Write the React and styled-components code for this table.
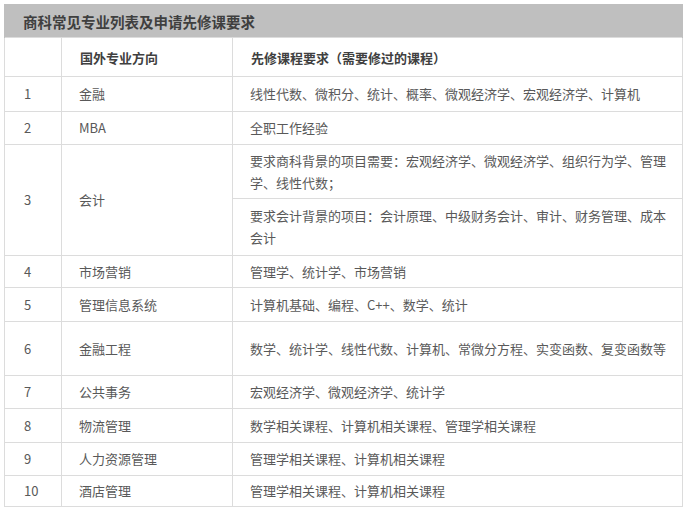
import React from "react";
import styled, { createGlobalStyle } from "styled-components";

const GlobalStyle = createGlobalStyle`
  html, body {
    margin: 0;
    padding: 0;
    background: #fff;
  }
  body {
    font-family: "Noto Sans CJK SC", "Liberation Sans", sans-serif;
  }
`;

const Wrap = styled.div`
  padding: 4px 5px 0 4px;
`;

const Table = styled.table`
  width: 678px;
  border-collapse: collapse;
  table-layout: fixed;
  font-size: 13px;
  color: #595959;
`;

const Caption = styled.th`
  height: 32px;
  padding: 0 0 0 18px;
  background: #bfbfbf;
  color: #3f3f3f;
  font-size: 14.5px;
  font-weight: 700;
  text-align: left;
  border: 1px solid #bfbfbf;
  border-bottom: none;
`;

const HeadCell = styled.th`
  height: 38px;
  padding: 0 10px 0 18px;
  border: 1px solid #dcdcdc;
  text-align: left;
  font-weight: 700;
  color: #404040;
  font-size: 13px;
`;

const Cell = styled.td`
  height: ${(p) => p.$h || 32}px;
  padding: 0 10px 0 ${(p) => (p.$first ? 19 : 17)}px;
  border: 1px solid #dcdcdc;
  line-height: 22px;
  vertical-align: middle;
  box-sizing: border-box;
`;

const rows = [
  { n: "1", major: "金融", req: "线性代数、微积分、统计、概率、微观经济学、宏观经济学、计算机", h: 35 },
  { n: "2", major: "MBA", req: "全职工作经验", h: 33 },
  {
    n: "3",
    major: "会计",
    sub: [
      { req: "要求商科背景的项目需要：宏观经济学、微观经济学、组织行为学、管理学、线性代数；", h: 54 },
      { req: "要求会计背景的项目：会计原理、中级财务会计、审计、财务管理、成本会计", h: 57 },
    ],
  },
  { n: "4", major: "市场营销", req: "管理学、统计学、市场营销", h: 32 },
  { n: "5", major: "管理信息系统", req: "计算机基础、编程、C++、数学、统计", h: 34 },
  { n: "6", major: "金融工程", req: "数学、统计学、线性代数、计算机、常微分方程、实变函数、复变函数等", h: 54 },
  { n: "7", major: "公共事务", req: "宏观经济学、微观经济学、统计学", h: 33 },
  { n: "8", major: "物流管理", req: "数学相关课程、计算机相关课程、管理学相关课程", h: 34 },
  { n: "9", major: "人力资源管理", req: "管理学相关课程、计算机相关课程", h: 33 },
  { n: "10", major: "酒店管理", req: "管理学相关课程、计算机相关课程", h: 31 },
];

export default function App() {
  return (
    <Wrap>
      <GlobalStyle />
      <Table>
        <colgroup>
          <col style={{ width: 57 }} />
          <col style={{ width: 171 }} />
          <col style={{ width: 450 }} />
        </colgroup>
        <thead>
          <tr>
            <Caption colSpan={3}>商科常见专业列表及申请先修课要求</Caption>
          </tr>
          <tr>
            <HeadCell />
            <HeadCell>国外专业方向</HeadCell>
            <HeadCell>先修课程要求（需要修过的课程）</HeadCell>
          </tr>
        </thead>
        <tbody>
          {rows.map((r) =>
            r.sub ? (
              r.sub.map((s, i) => (
                <tr key={r.n + "-" + i}>
                  {i === 0 && (
                    <>
                      <Cell $first rowSpan={r.sub.length}>{r.n}</Cell>
                      <Cell rowSpan={r.sub.length}>{r.major}</Cell>
                    </>
                  )}
                  <Cell $h={s.h}>{s.req}</Cell>
                </tr>
              ))
            ) : (
              <tr key={r.n}>
                <Cell $first $h={r.h}>{r.n}</Cell>
                <Cell $h={r.h}>{r.major}</Cell>
                <Cell $h={r.h}>{r.req}</Cell>
              </tr>
            )
          )}
        </tbody>
      </Table>
    </Wrap>
  );
}
